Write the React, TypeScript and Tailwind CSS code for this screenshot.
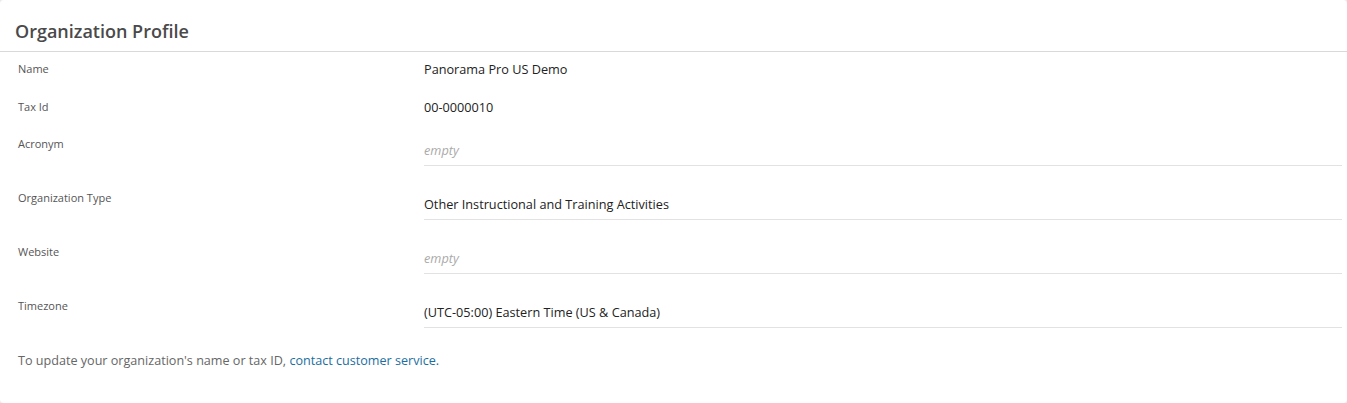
const rows = [
  { label: "Name", value: "Panorama Pro US Demo", editable: false },
  { label: "Tax Id", value: "00-0000010", editable: false },
  { label: "Acronym", value: "", editable: true },
  { label: "Organization Type", value: "Other Instructional and Training Activities", editable: true },
  { label: "Website", value: "", editable: true },
  { label: "Timezone", value: "(UTC-05:00) Eastern Time (US & Canada)", editable: true },
];

function Field({ label, value, editable }: { label: string; value: string; editable: boolean }) {
  return (
    <div className={`flex ${editable ? "h-[54px]" : "h-[37.5px]"}`}>
      <div className="w-[424px] shrink-0 pt-[4px] pl-[18px] text-[11px] leading-[16px] text-[#555]">{label}</div>
      {editable ? (
        <div className="flex-1 mr-[5px] h-[34px] border-b border-[#e2e2e2] pt-[5px]">
          {value ? (
            <span className="text-[12.7px] leading-[18px] text-[#222]">{value}</span>
          ) : (
            <span className="text-[12.7px] leading-[18px] italic text-[#aaa]">empty</span>
          )}
        </div>
      ) : (
        <div className="flex-1 pt-[3px] text-[12.7px] leading-[18px] text-[#222]">{value}</div>
      )}
    </div>
  );
}

export default function App() {
  return (
    <div className="h-[403px] w-[1347px] bg-[#ebebeb] font-['Open_Sans',sans-serif]">
      <div className="h-full w-full rounded-[4px] bg-white">
        <div className="h-[52px] border-b border-[#d9d9d9] pl-[15px] pt-[19px]">
          <h1 className="text-[18px] font-semibold leading-[24px] text-[#4a4a4a]">Organization Profile</h1>
        </div>
        <div className="pt-[5px]">
          {rows.map((r) => (
            <Field key={r.label} {...r} />
          ))}
        </div>
        <p className="pl-[18px] pt-[4px] text-[12.6px] leading-[18px] text-[#666]">
          To update your organization's name or tax ID,{" "}
          <a href="#" className="text-[#1b6ea0]">contact customer service.</a>
        </p>
      </div>
    </div>
  );
}
